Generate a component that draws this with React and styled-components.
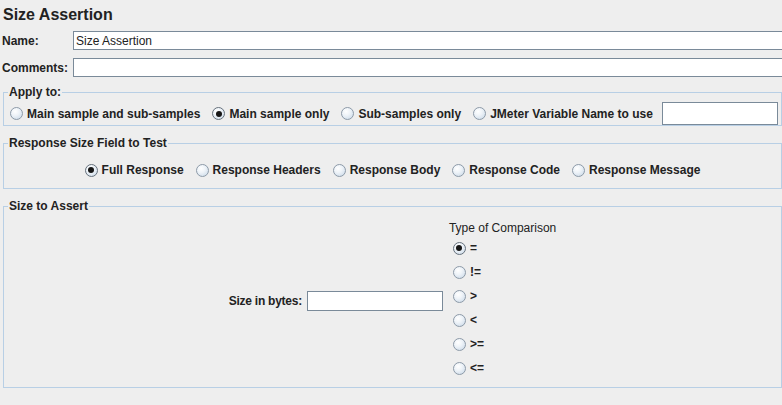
import React from 'react'
import styled, { createGlobalStyle, css } from 'styled-components'

const GlobalStyle = createGlobalStyle`
  html, body {
    margin: 0;
    padding: 0;
    background: #eeeeee;
    overflow: hidden;
  }
  body {
    font-family: "Liberation Sans", Arial, sans-serif;
    font-size: 12px;
    color: #222;
  }
`

const Page = styled.div`
  width: 782px;
  height: 405px;
  overflow: hidden;
`

const Title = styled.div`
  height: 30px;
  padding-left: 3px;
  font-size: 16px;
  font-weight: bold;
  line-height: 29px;
`

const FieldRow = styled.div`
  display: flex;
  align-items: center;
  padding-left: 2px;
  margin-top: ${p => p.$top || 0}px;
`

const FieldLabel = styled.label`
  width: 71px;
  flex: none;
  font-weight: bold;
`

const TextInput = styled.input`
  box-sizing: border-box;
  width: ${p => p.$w || 720}px;
  height: ${p => p.$h || 19}px;
  flex: none;
  margin: 0;
  padding: 0 2px;
  border: 1px solid #7a8a99;
  background: #fff;
  font-family: "Liberation Sans", Arial, sans-serif;
  font-size: 12px;
  color: #222;
  outline: none;
`

const Panel = styled.fieldset`
  margin: ${p => p.$top}px 0 0 3px;
  padding: ${p => p.$pad};
  border: 1px solid #b8cfe5;
  min-width: 0;
`

const Legend = styled.legend`
  margin-left: 4px;
  padding: 0 1px;
  font-weight: bold;
  line-height: 14px;
`

const RadioRow = styled.div`
  display: flex;
  align-items: center;
  justify-content: ${p => (p.$center ? 'center' : 'flex-start')};
  gap: 12px;
  height: ${p => p.$h || 20}px;
  padding-left: ${p => p.$indent || 0}px;
`

const Option = styled.span`
  display: inline-flex;
  align-items: center;
  gap: 4px;
  font-weight: bold;
  white-space: nowrap;
`

const RadioDot = styled.span`
  position: relative;
  box-sizing: border-box;
  width: 13px;
  height: 13px;
  flex: none;
  border-radius: 50%;
  border: 1px solid #8d9aa8;
  background: radial-gradient(circle at 38% 32%, #ffffff 0%, #eef3f8 40%, #c6d6e6 100%);
  ${p =>
    p.$on &&
    css`
      border-color: #66717c;
      &::after {
        content: '';
        position: absolute;
        left: 2.5px;
        top: 2.5px;
        width: 6px;
        height: 6px;
        border-radius: 50%;
        background: #161616;
      }
    `}
`

const AssertBody = styled.div`
  display: flex;
  justify-content: center;
  align-items: center;
  height: 173px;
  padding-top: 1px;
`

const SizeGroup = styled.div`
  display: flex;
  align-items: center;
  gap: 5px;
  margin-right: 6px;
`

const BoldLabel = styled.span`
  font-weight: bold;
  letter-spacing: -0.25px;
`

const CompareColumn = styled.div`
  display: flex;
  flex-direction: column;
`

const CompareTitle = styled.div`
  line-height: 14px;
  height: 15px;
`

const CompareOption = styled(Option)`
  height: 24px;
  padding-left: 4px;
`

const Radio = ({ on, children }) => (
  <Option>
    <RadioDot $on={on} />
    {children}
  </Option>
)

const applyTo = [
  ['Main sample and sub-samples', false],
  ['Main sample only', true],
  ['Sub-samples only', false],
  ['JMeter Variable Name to use', false],
]

const fields = [
  ['Full Response', true],
  ['Response Headers', false],
  ['Response Body', false],
  ['Response Code', false],
  ['Response Message', false],
]

const comparisons = ['=', '!=', '>', '<', '>=', '<=']

export default function App() {
  return (
    <Page>
      <GlobalStyle />
      <Title>Size Assertion</Title>
      <FieldRow $top={1}>
        <FieldLabel>Name:</FieldLabel>
        <TextInput defaultValue="Size Assertion" />
      </FieldRow>
      <FieldRow $top={8}>
        <FieldLabel>Comments:</FieldLabel>
        <TextInput $h={19} />
      </FieldRow>

      <Panel $top={8} $pad="3px 0 0 0">
        <Legend>Apply to:</Legend>
        <RadioRow $h={23} $indent={6}>
          {applyTo.map(([label, on]) => (
            <Radio key={label} on={on}>
              {label}
            </Radio>
          ))}
          <TextInput $w={116} $h={23} style={{ marginLeft: -3 }} />
        </RadioRow>
      </Panel>

      <Panel $top={10} $pad="10px 0 8px 0">
        <Legend>Response Size Field to Test</Legend>
        <RadioRow $center>
          {fields.map(([label, on]) => (
            <Radio key={label} on={on}>
              {label}
            </Radio>
          ))}
        </RadioRow>
      </Panel>

      <Panel $top={10} $pad="0">
        <Legend>Size to Assert</Legend>
        <AssertBody>
          <SizeGroup>
            <BoldLabel>Size in bytes:</BoldLabel>
            <TextInput $w={136} $h={20} />
          </SizeGroup>
          <CompareColumn>
            <CompareTitle>Type of Comparison</CompareTitle>
            {comparisons.map((c, i) => (
              <CompareOption key={c}>
                <RadioDot $on={i === 0} />
                {c}
              </CompareOption>
            ))}
          </CompareColumn>
        </AssertBody>
      </Panel>
    </Page>
  )
}
